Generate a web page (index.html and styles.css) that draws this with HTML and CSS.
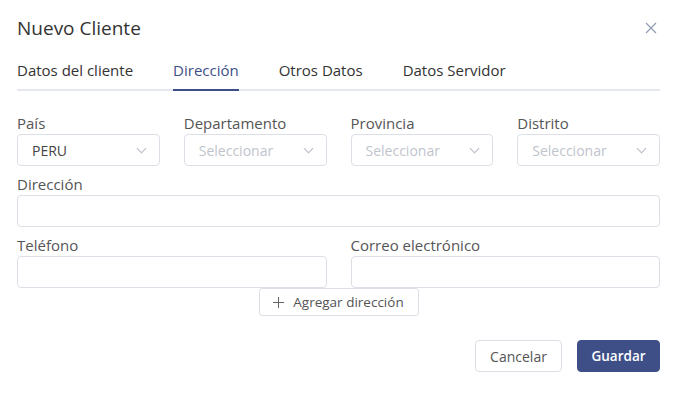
FILE: index.html
```html
<!DOCTYPE html>
<html lang="es">
<head>
    <meta charset="UTF-8">
    <meta name="viewport" content="width=device-width, initial-scale=1.0">
    <title>Nuevo Cliente</title>
    <link rel="stylesheet" href="styles.css">
</head>
<body>
    <div class="modal">
        <div class="modal-header">
            <div class="modal-title">Nuevo Cliente</div>
            <button class="close-btn" aria-label="Cerrar">
                <svg width="12" height="12" viewBox="0 0 12 12"><path d="M1 1 L11 11 M11 1 L1 11" stroke="#8f9bb3" stroke-width="1.2" fill="none"/></svg>
            </button>
        </div>

        <div class="tabs">
            <div class="tab">Datos del cliente</div>
            <div class="tab active">Dirección</div>
            <div class="tab">Otros Datos</div>
            <div class="tab">Datos Servidor</div>
        </div>

        <form class="form">
            <div class="row cols-4">
                <div class="field">
                    <label>País</label>
                    <div class="select"><span class="value">PERU</span><span class="arrow"></span></div>
                </div>
                <div class="field">
                    <label>Departamento</label>
                    <div class="select"><span class="placeholder">Seleccionar</span><span class="arrow"></span></div>
                </div>
                <div class="field">
                    <label>Provincia</label>
                    <div class="select"><span class="placeholder">Seleccionar</span><span class="arrow"></span></div>
                </div>
                <div class="field">
                    <label>Distrito</label>
                    <div class="select"><span class="placeholder">Seleccionar</span><span class="arrow"></span></div>
                </div>
            </div>

            <div class="field">
                <label>Dirección</label>
                <input class="input" type="text">
            </div>

            <div class="row cols-2">
                <div class="field">
                    <label>Teléfono</label>
                    <input class="input" type="text">
                </div>
                <div class="field">
                    <label>Correo electrónico</label>
                    <input class="input" type="text">
                </div>
            </div>

            <div class="add-row">
                <button type="button" class="add-btn">
                    <svg width="11" height="11" viewBox="0 0 11 11"><path d="M5.5 0 V11 M0 5.5 H11" stroke="#666" stroke-width="1" fill="none"/></svg>
                    Agregar dirección
                </button>
            </div>
        </form>

        <div class="footer">
            <button class="btn btn-cancel">Cancelar</button>
            <button class="btn btn-save">Guardar</button>
        </div>
    </div>
</body>
</html>
```

FILE: styles.css
```css
body {
    font-family: "Open Sans", Arial, sans-serif;
    margin: 0;
    background-color: white;
    color: #333;
}
.modal {
    padding: 16px 16px 0 17px;
}
.modal-header {
    display: flex;
    justify-content: space-between;
    align-items: center;
    height: 24px;
}
.modal-title {
    font-size: 19px;
    line-height: 24px;
    color: #333;
}
.close-btn {
    background: none;
    border: none;
    padding: 0;
    margin-right: 3px;
    display: flex;
    cursor: pointer;
}
.tabs {
    display: flex;
    margin-top: 9px;
    border-bottom: 2px solid #e6e8ef;
}
.tab {
    font-size: 15px;
    line-height: 20px;
    padding: 11px 0 9px;
    margin-right: 40px;
    color: #333;
    margin-bottom: -2px;
    border-bottom: 2px solid transparent;
}
.tab.active {
    color: #3e4f88;
    border-bottom-color: #3e4f88;
}
.form {
    padding-top: 22px;
}
.row {
    display: grid;
    gap: 0 24px;
}
.cols-4 {
    grid-template-columns: repeat(4, 1fr);
}
.cols-2 {
    grid-template-columns: repeat(2, 1fr);
}
.field {
    margin-bottom: 8px;
}
.cols-2 .field {
    margin-bottom: 0;
}
.field label {
    display: block;
    font-size: 15px;
    line-height: 20px;
    color: #555;
    margin-bottom: 1px;
}
.select,
.input {
    box-sizing: border-box;
    height: 32px;
    width: 100%;
    border: 1px solid #dcdfe6;
    border-radius: 4px;
    background: white;
}
.select {
    display: flex;
    align-items: center;
    justify-content: space-between;
    padding: 0 14px 0 14px;
    font-size: 14px;
}
.select .value {
    color: #444;
}
.select .placeholder {
    color: #c0c4cc;
}
.arrow {
    width: 6px;
    height: 6px;
    border-right: 1px solid #b8bcc6;
    border-bottom: 1px solid #b8bcc6;
    transform: rotate(45deg);
    margin-top: -4px;
}
.input {
    display: block;
    font-family: inherit;
    outline: none;
}
.add-row {
    display: flex;
    justify-content: center;
}
.add-btn {
    display: flex;
    align-items: center;
    gap: 9px;
    height: 28px;
    width: 160px;
    justify-content: center;
    background: white;
    border: 1px solid #dcdfe6;
    border-radius: 3px;
    font-family: inherit;
    font-size: 13.5px;
    color: #555;
}
.footer {
    display: flex;
    justify-content: flex-end;
    gap: 15px;
    margin-top: 24px;
}
.btn {
    height: 32px;
    border-radius: 4px;
    font-family: inherit;
    font-size: 14px;
    cursor: pointer;
}
.btn-cancel {
    width: 87px;
    background: white;
    border: 1px solid #dcdfe6;
    color: #555;
}
.btn-save {
    width: 83px;
    background-color: #3e4f88;
    border: 1px solid #3e4f88;
    color: white;
    font-size: 13.5px;
    font-weight: 600;
}
```
